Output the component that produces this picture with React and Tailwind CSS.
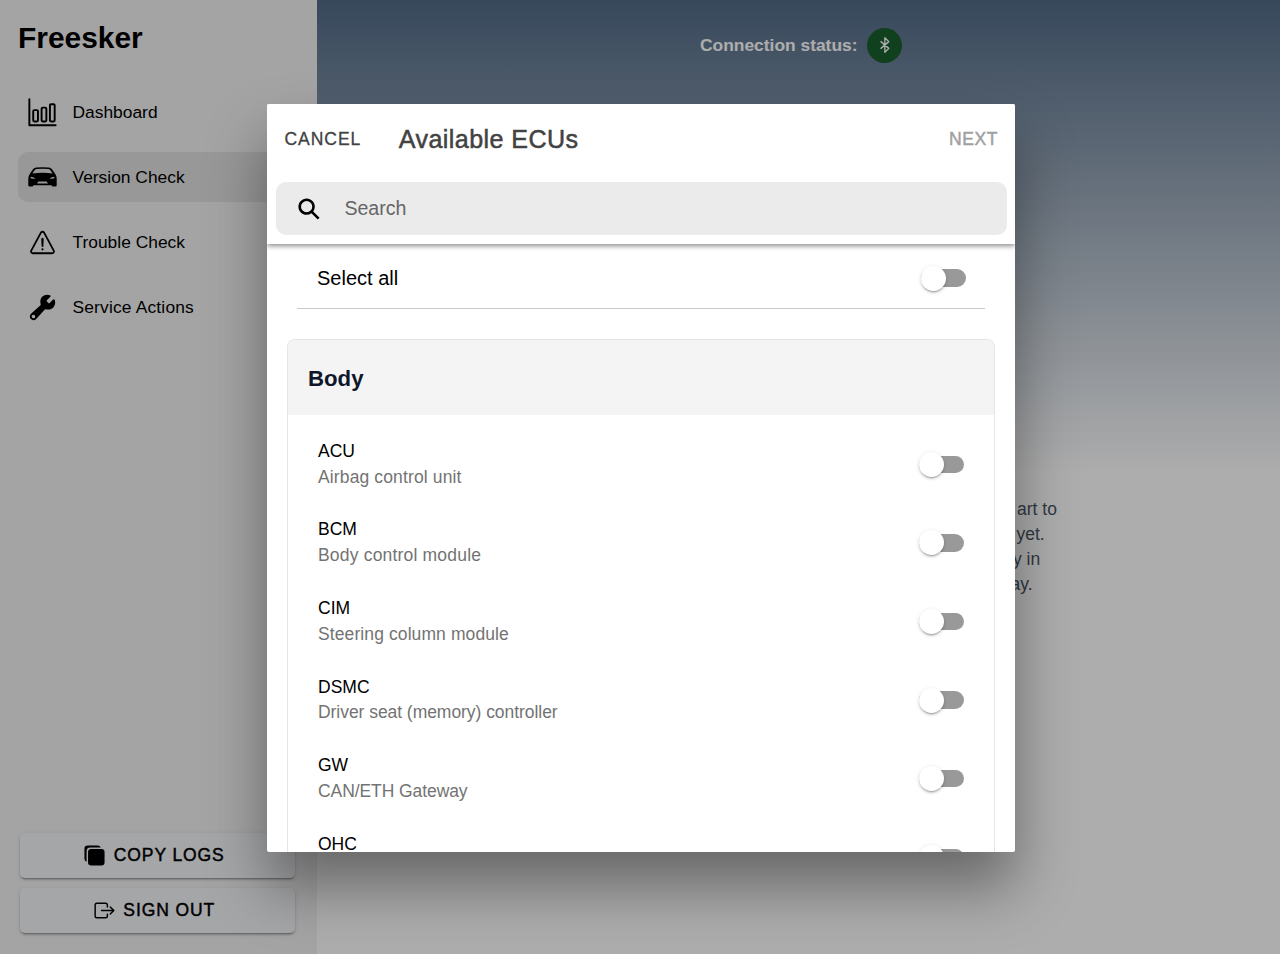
import {
  IoWarningOutline,
  IoBuild,
  IoCopy,
  IoExitOutline,
  IoSearchSharp,
} from "react-icons/io5";

function BarChartIcon({ className }) {
  return (
    <svg viewBox="0 0 512 512" className={className} fill="none" stroke="currentColor" strokeWidth="34" strokeLinecap="round" strokeLinejoin="round">
      <path d="M24 20v460h464" />
      <rect x="92" y="214" width="84" height="200" rx="20" />
      <rect x="240" y="170" width="84" height="244" rx="20" />
      <rect x="387" y="110" width="84" height="304" rx="20" />
    </svg>
  );
}

function CarIcon({ className }) {
  return (
    <svg viewBox="0 0 29 29" className={className} fill="currentColor">
      <path
        fillRule="evenodd"
        d="M2.2 10.2L5 6.3Q6.3 4.7 8.3 4.5Q14.5 3.9 20.7 4.5Q22.7 4.7 24 6.3L26.8 10.2Q28.7 12.8 28.7 15.5V22.2Q28.7 23.6 27.4 23.6H25Q23.7 23.6 23.6 22.2H5.4Q5.3 23.6 4 23.6H1.6Q.3 23.6 .3 22.2V15.5Q.3 12.8 2.2 10.2ZM4.4 10.4Q14.5 8.9 24.6 10.4L22.6 7.5Q21.8 6.3 20.4 6.1Q14.5 5.5 8.6 6.1Q7.2 6.3 6.4 7.5ZM2.8 13.7Q5 14 7.3 15.2Q5 16.2 2.6 15.3ZM26.2 13.7Q24 14 21.7 15.2Q24 16.2 26.4 15.3ZM10.3 18.6L9 20.6H20L18.7 18.6Z"
      />
    </svg>
  );
}

function BluetoothIcon({ className }) {
  return (
    <svg viewBox="0 0 512 512" className={className} fill="none" stroke="currentColor" strokeWidth="38" strokeLinecap="round" strokeLinejoin="round">
      <path d="M140 160l224 192-112 112V48l112 112-224 192" />
    </svg>
  );
}

const navItems = [
  { label: "Dashboard", Icon: BarChartIcon },
  { label: "Version Check", Icon: CarIcon, active: true },
  { label: "Trouble Check", Icon: IoWarningOutline },
  { label: "Service Actions", Icon: IoBuild, tracking: "tracking-[0.17px]" },
];

const units = [
  { code: "ACU", name: "Airbag control unit", tracking: "tracking-[0.13px]" },
  { code: "BCM", name: "Body control module", tracking: "tracking-[0.19px]" },
  { code: "CIM", name: "Steering column module", tracking: "tracking-[0.1px]" },
  { code: "DSMC", name: "Driver seat (memory) controller", tracking: "tracking-[-0.05px]" },
  { code: "GW", name: "CAN/ETH Gateway", tracking: "tracking-[-0.08px]" },
  { code: "OHC", name: "", tracking: "" },
];

function Toggle() {
  return (
    <div className="flex h-[17.5px] w-[45px] shrink-0 items-center rounded-full bg-[#999999]">
      <div className="size-[25px] shrink-0 rounded-full bg-white shadow-[0_3px_1px_-2px_rgba(0,0,0,0.2),0_2px_2px_0_rgba(0,0,0,0.14),0_1px_5px_0_rgba(0,0,0,0.12)]" />
    </div>
  );
}

function SideButton({ Icon, children }) {
  return (
    <button className="flex h-[45px] w-full items-center justify-center rounded-[5px] bg-[#f4f5f8] pr-[7px] text-[17.5px] tracking-[0.9px] text-black shadow-[0_3px_1px_-2px_rgba(0,0,0,0.2),0_2px_2px_0_rgba(0,0,0,0.14),0_1px_5px_0_rgba(0,0,0,0.12)] [-webkit-text-stroke:0.45px_black]">
      <Icon className="mr-[7.5px] size-[23px]" />
      {children}
    </button>
  );
}

function Sidebar() {
  return (
    <aside className="flex w-[317px] shrink-0 flex-col bg-[#f2f2f2] pb-[21px]">
      <h1 className="pt-[18px] pl-[18px] text-[29.9px] leading-[40px] font-bold text-black">Freesker</h1>
      <nav className="mt-[29.4px] flex flex-col gap-[15px] px-[18px]">
        {navItems.map(({ label, Icon, active, tracking }) => (
          <div
            key={label}
            className={
              active
                ? "flex h-[50px] items-center rounded-[10px] bg-[#e0e0e0] pl-[10px]"
                : "flex h-[50px] items-center pl-[10px]"
            }
          >
            <Icon className="size-[29px] text-black" />
            <span className={`ml-[15.5px] text-[17.4px] text-black ${tracking ?? ""}`}>{label}</span>
          </div>
        ))}
      </nav>
      <div className="mt-auto flex flex-col gap-[10px] pr-[22px] pl-[20px]">
        <SideButton Icon={IoCopy}>COPY LOGS</SideButton>
        <SideButton Icon={IoExitOutline}>SIGN OUT</SideButton>
      </div>
    </aside>
  );
}

function Main() {
  return (
    <main className="flex-1 bg-white">
      <div className="h-[473px] bg-[linear-gradient(to_bottom,#526b87,#ffffff)]">
        <div className="flex items-center gap-[10px] pt-[27.5px] pl-[383px]">
          <span className="text-[17.4px] font-bold text-white">Connection status:</span>
          <span className="flex size-[35px] items-center justify-center rounded-full bg-[#185f2c] text-white">
            <BluetoothIcon className="size-[18px]" />
          </span>
        </div>
      </div>
      <div className="pt-[24px] text-[17.5px] leading-[25px] text-[#4b5563]">
        <div className="pl-[700px]">art to</div>
        <div className="pl-[699.5px]">yet.</div>
        <div className="pl-[696px]">y in</div>
        <div className="pl-[693.5px]">ay.</div>
      </div>
    </main>
  );
}

function Modal() {
  return (
    <section className="flex h-[748px] w-[748px] flex-col overflow-hidden rounded-[2px] bg-white shadow-[0_35px_60px_rgba(0,0,0,0.4)]">
      <header className="z-10 h-[140px] shrink-0 bg-white pr-[8.5px] pl-[9px] shadow-[0_2px_5px_rgba(0,0,0,0.45)]">
        <div className="flex h-[70px] items-center px-[8.5px]">
          <span className="text-[17.5px] tracking-[0.95px] text-[#424242] [-webkit-text-stroke:0.3px_#424242]">CANCEL</span>
          <span className="ml-[37.6px] pt-[2px] text-[25.1px] tracking-[0.42px] text-[#424242] [-webkit-text-stroke:0.5px_#424242]">Available ECUs</span>
          <span className="ml-auto text-[17.5px] tracking-[0.6px] text-[#a0a0a0] [-webkit-text-stroke:0.45px_#a0a0a0]">NEXT</span>
        </div>
        <div className="mt-[8px] flex h-[53px] items-center rounded-[10px] bg-[#ebebeb] pl-[20px]">
          <IoSearchSharp className="size-[26px] text-black" />
          <span className="ml-[22.4px] text-[19.6px] text-[#666666]">Search</span>
        </div>
      </header>
      <div className="flex-1 overflow-hidden px-[20px]">
        <div className="mx-[10px] flex h-[65px] items-center justify-between border-b border-[#c8c8c8] pt-[4px] pr-[19.5px] pl-[20px]">
          <span className="text-[20px] text-black">Select all</span>
          <Toggle />
        </div>
        <div className="mt-[30px] overflow-hidden rounded-t-[8px] border-x border-t border-[#e6e6e6] bg-white">
          <h2 className="flex h-[75px] items-center bg-[#f4f4f4] pt-[2px] pl-[20px] text-[22.2px] font-bold text-[#0f172a]">Body</h2>
          <ul className="pt-[10px] pr-[30px] pl-[30px]">
            {units.map((u) => (
              <li key={u.code} className="flex h-[78.6px] items-center justify-between">
                <div className="h-[51px] text-[17.5px] leading-[25.7px]">
                  <div className="text-black">{u.code}</div>
                  <div className={`text-[#737373] ${u.tracking}`}>{u.name}</div>
                </div>
                <Toggle />
              </li>
            ))}
          </ul>
        </div>
      </div>
    </section>
  );
}

export default function App() {
  return (
    <div className="relative h-[954px] w-[1280px] overflow-hidden font-['Liberation_Sans',Arial,sans-serif]">
      <div className="flex h-full">
        <Sidebar />
        <Main />
      </div>
      <div className="absolute inset-0 flex items-start justify-center bg-black/32 pt-[104px] pl-[2px]">
        <Modal />
      </div>
    </div>
  );
}
